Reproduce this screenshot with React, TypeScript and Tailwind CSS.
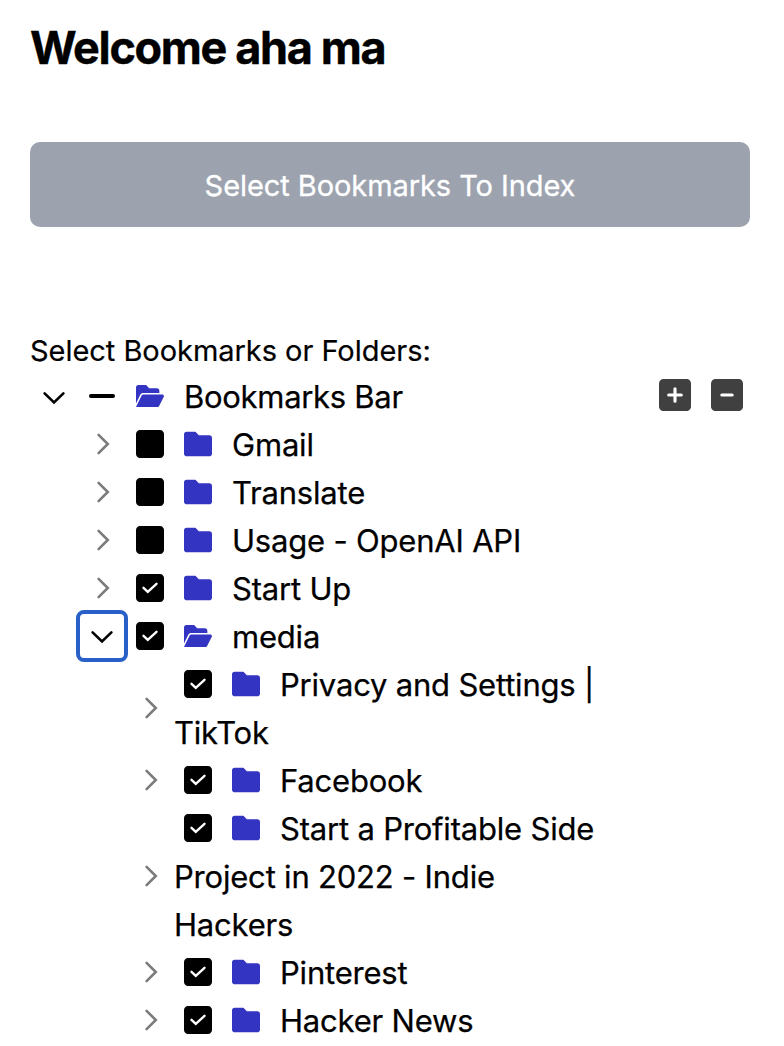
import { ReactNode } from "react";

const SQUARE = "M384 32C419.3 32 448 60.65 448 96V416C448 451.3 419.3 480 384 480H64C28.65 480 0 451.3 0 416V96C0 60.65 28.65 32 64 32H384z";

function Chevron({ open = false }: { open?: boolean }) {
  return (
    <svg
      viewBox="0 0 24 24"
      className={open ? "h-6 w-6 text-black" : "mb-[2px] h-6 w-6 text-[#7c7c7c]"}
      fill="none"
      stroke="currentColor"
      strokeWidth="2.6"
      strokeLinecap="round"
    >
      <path d={open ? "M2.6 8.4 12 17.4l9.4-9" : "M8.6 2.8 17.8 12l-9.2 9.2"} />
    </svg>
  );
}

function Folder({ open = false }: { open?: boolean }) {
  return open ? (
    <svg viewBox="0 0 576 512" className="h-[26px] w-7 shrink-0 text-[#3434c3]" fill="currentColor">
      <path d="M147.8 192H480V144C480 117.5 458.5 96 432 96h-160l-64-64h-160C21.49 32 0 53.49 0 80v328.4l90.54-181.1C101.4 205.6 123.4 192 147.8 192zM543.1 224H147.8C135.7 224 124.6 230.8 119.2 241.7L0 480h447.1c12.12 0 23.2-6.852 28.62-17.69l96-192C583.2 249 567.7 224 543.1 224z" />
    </svg>
  ) : (
    <svg viewBox="0 0 512 512" className="h-7 w-7 shrink-0 text-[#3434c3]" fill="currentColor">
      <path d="M512 144v288c0 26.5-21.5 48-48 48h-416C21.5 480 0 458.5 0 432v-352C0 53.5 21.5 32 48 32h160l64 64h192C490.5 96 512 117.5 512 144z" />
    </svg>
  );
}

function Check({ on }: { on: boolean }) {
  return (
    <svg viewBox="0 32 448 448" className="h-7 w-7 shrink-0">
      <path d={SQUARE} />
      {on && (
        <path fill="none" stroke="#fff" strokeWidth="38" strokeLinecap="round" d="M120 254 188 318 328 190" />
      )}
    </svg>
  );
}

function SquareButton({ plus = false }: { plus?: boolean }) {
  return (
    <button className="h-8 w-8">
      <svg viewBox="0 32 448 448" className="h-8 w-8 text-[#404040]" fill="currentColor">
        <path d={SQUARE} />
        <path
          stroke="#fff"
          strokeWidth="44"
          strokeLinecap="round"
          d={plus ? "M136 256H312M224 168V344" : "M152 256H296"}
        />
      </svg>
    </button>
  );
}

function Row({ on = false, open, focus, nested, children }: { on?: boolean; open?: boolean; focus?: boolean; nested?: boolean; children: ReactNode }) {
  return (
    <li className={nested ? "flex items-center pl-12" : "flex items-center"}>
      <span
        className={
          focus
            ? "-mx-[2px] -mt-[3px] -mb-[1px] flex h-[52px] w-[52px] items-center justify-center rounded-[8px] border-4 border-[#2860c8]"
            : "flex h-12 w-12 items-center justify-center"
        }
      >
        <Chevron open={open} />
      </span>
      <span className="block w-[430px]">
        <span className="ml-[10px] inline-flex h-12 items-center gap-5 pr-5 pb-[2px] align-top">
          <Check on={on} />
          <Folder open={open} />
        </span>
        {children}
      </span>
    </li>
  );
}

export default function App() {
  return (
    <main className="h-[1046px] w-[784px] overflow-hidden bg-white px-[30px] pt-[24px] font-['Inter',sans-serif] text-black">
      <h1 className="h-[118px] text-[45px] leading-[48px] font-bold tracking-[-1.35px] [-webkit-text-stroke:0.4px_#000]">
        Welcome aha ma
      </h1>
      <button className="block h-[85px] w-[720px] rounded-[10px] bg-[#9ca3af] pt-[2px] text-[29px] tracking-[-0.07px] text-white [-webkit-text-stroke:0.3px_#fff]">
        Select Bookmarks To Index
      </button>
      <p className="mt-[100px] h-[46px] text-[29px] leading-[48px] tracking-[-0.04px] [-webkit-text-stroke:0.2px_#000]">
        Select Bookmarks or Folders:
      </p>
      <div className="text-[31px] leading-[48px] tracking-[-0.2px] [-webkit-text-stroke:0.25px_#000]">
        <div className="flex h-12 items-center">
          <span className="flex w-12 justify-center">
            <Chevron open />
          </span>
          <span className="mr-[21px] mb-[2px] ml-[11px] h-1 w-[26px] rounded-full bg-black" />
          <span className="mb-[2px]">
            <Folder open />
          </span>
          <span className="ml-5 tracking-[-0.3px]">Bookmarks Bar</span>
          <span className="mr-[11px] mb-1 ml-auto flex gap-5">
            <SquareButton plus />
            <SquareButton />
          </span>
        </div>
        <ul className="pl-12">
          <Row>Gmail</Row>
          <Row>Translate</Row>
          <Row>Usage - OpenAI API</Row>
          <Row on>Start Up</Row>
          <Row on open focus>media</Row>
          <Row on nested>Privacy and Settings | TikTok</Row>
          <Row on nested>Facebook</Row>
          <Row on nested>Start a Profitable Side Project in 2022 - Indie Hackers</Row>
          <Row on nested>Pinterest</Row>
          <Row on nested>Hacker News</Row>
        </ul>
      </div>
    </main>
  );
}
